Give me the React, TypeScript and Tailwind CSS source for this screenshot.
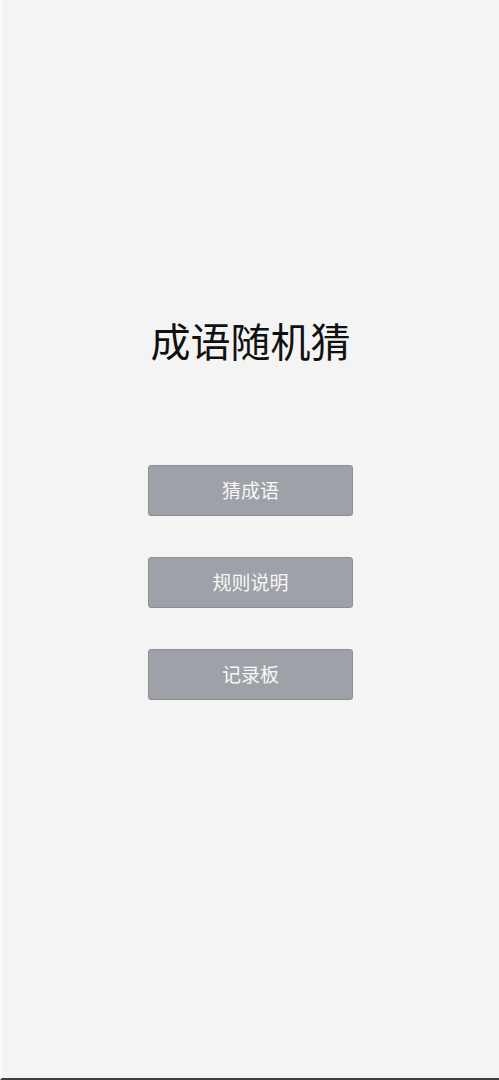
export default function App() {
  const buttons = ['猜成语', '规则说明', '记录板']

  return (
    <div
      className="flex h-[1080px] w-full flex-col items-center border-b-2 border-l-2 border-b-[#3f3f3f] border-l-[#fbfbfb] bg-[#f4f4f4]"
      style={{ fontFamily: '"Noto Sans CJK SC", "Noto Sans", sans-serif' }}
    >
      {/* Title */}
      <h1 className="mt-[320px] text-[40px] leading-[40px] font-normal text-[#111111]">成语随机猜</h1>

      {/* Menu */}
      <div className="mt-[105px] flex flex-col gap-[41px]">
        {buttons.map((label) => (
          <button
            key={label}
            className="flex h-[51px] w-[205px] items-center justify-center rounded-[3px] border border-[#8c9096] bg-[#9ea2a8] text-[19px] text-[#f7f7f7]"
          >
            {label}
          </button>
        ))}
      </div>
    </div>
  )
}
